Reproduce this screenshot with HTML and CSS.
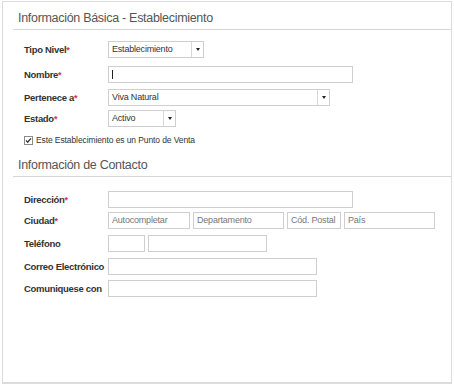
FILE: index.html
```html
<!DOCTYPE html>
<html lang="es">
<head>
<meta charset="utf-8">
<title>Establecimiento</title>
<link rel="stylesheet" href="styles.css">
</head>
<body>
<div class="panel">
  <h2 class="section-title">Información Básica - Establecimiento</h2>
  <div class="form">
    <div class="row row-tipo">
      <label class="lbl">Tipo Nivel<span class="req">*</span></label>
      <div class="select w-tipo"><span class="select-text">Establecimiento</span><span class="select-btn"><span class="tri"></span></span></div>
    </div>
    <div class="row row-nombre">
      <label class="lbl">Nombre<span class="req">*</span></label>
      <div class="input w-long"><span class="caret"></span></div>
    </div>
    <div class="row row-pert">
      <label class="lbl">Pertenece a<span class="req">*</span></label>
      <div class="select w-pert"><span class="select-text">Viva Natural</span><span class="select-btn"><span class="tri"></span></span></div>
    </div>
    <div class="row row-estado">
      <label class="lbl">Estado<span class="req">*</span></label>
      <div class="select w-estado"><span class="select-text">Activo</span><span class="select-btn"><span class="tri"></span></span></div>
    </div>
    <div class="check-row">
      <svg class="chk" width="9" height="9" viewBox="0 0 9 9"><rect x="0.5" y="0.5" width="8" height="8" fill="#fff" stroke="#8a8a8a"/><path d="M2 4.4 L3.7 6.2 L7 2.4" fill="none" stroke="#333" stroke-width="1.3"/></svg>
      <span class="check-text">Este Establecimiento es un Punto de Venta</span>
    </div>
  </div>
  <h2 class="section-title second">Información de Contacto</h2>
  <div class="form form-contact">
    <div class="row row-dir">
      <label class="lbl">Dirección<span class="req">*</span></label>
      <div class="input w-long"></div>
    </div>
    <div class="row row-ciudad">
      <label class="lbl">Ciudad<span class="req">*</span></label>
      <div class="group">
        <div class="input w-auto ph">Autocompletar</div>
        <div class="input w-depto ph">Departamento</div>
        <div class="input w-cp ph">Cód. Postal</div>
        <div class="input w-pais ph">País</div>
      </div>
    </div>
    <div class="row row-tel">
      <label class="lbl">Teléfono</label>
      <div class="group">
        <div class="input w-ind"></div>
        <div class="input w-tel"></div>
      </div>
    </div>
    <div class="row row-correo">
      <label class="lbl">Correo Electrónico</label>
      <div class="input w-mid"></div>
    </div>
    <div class="row row-com">
      <label class="lbl">Comuniquese con</label>
      <div class="input w-mid"></div>
    </div>
  </div>
</div>
</body>
</html>
```
FILE: styles.css
```css
* { box-sizing: border-box; }
html, body { margin: 0; padding: 0; background: #fff; }
body { font-family: "Liberation Sans", Arial, sans-serif; color: #333; }

.panel {
  margin: 1px 0 0 2px;
  width: 450px;
  height: 383px;
  border: 1px solid #dcdcdc;
  border-bottom-width: 2px;
  padding: 0 0 0 10px;
}

.section-title {
  margin: 0;
  padding: 8px 0 3px 5px;
  font-family: "Liberation Sans", Arial, sans-serif;
  font-weight: normal;
  font-size: 12.5px;
  letter-spacing: -0.3px;
  line-height: 16px;
  color: #555;
  border-bottom: 1px solid #d6d6d6;
}
.section-title.second { padding-top: 8px; }

.form { padding: 11px 0 0 11px; }
.form-contact { padding-top: 14px; }

.row {
  display: flex;
  align-items: center;
  height: 17px;
  margin-bottom: 6px;
}
.row-tipo { margin-bottom: 8px; }
.row-pert { margin-bottom: 4px; }
.row-estado { margin-bottom: 6px; }
.row-dir { margin-bottom: 4px; }
.row-ciudad { margin-bottom: 6px; }
.row-tel { margin-bottom: 6px; }
.row-correo { margin-bottom: 5px; }

.lbl {
  width: 84px;
  flex: none;
  white-space: nowrap;
  font-size: 9.5px;
  letter-spacing: -0.3px;
  font-weight: bold;
  color: #333;
}
.req { color: #c8336a; font-size: 9px; }

.input, .select {
  height: 17px;
  border: 1px solid #cfcfcf;
  background: #fff;
  font-size: 9px;
  letter-spacing: -0.2px;
  line-height: 15px;
  color: #333;
  flex: none;
  white-space: nowrap;
  overflow: hidden;
}
.input { padding: 0 3px; position: relative; }
.ph { color: #777; }
.caret {
  position: absolute;
  left: 3px;
  top: 3px;
  width: 1px;
  height: 9px;
  background: #222;
}

.select { display: flex; }
.select-text { flex: 1; padding: 0 3px; }
.select-btn {
  width: 12px;
  border-left: 1px solid #d8d8d8;
  display: flex;
  align-items: center;
  justify-content: center;
}
.tri {
  width: 0; height: 0;
  border-left: 2.5px solid transparent;
  border-right: 2.5px solid transparent;
  border-top: 3px solid #222;
}

.group { display: flex; gap: 3px; }

.w-tipo { width: 96px; }
.w-long { width: 245px; }
.w-pert { width: 222px; }
.w-estado { width: 68px; }
.w-auto { width: 82px; }
.w-depto { width: 91px; }
.w-cp { width: 54px; }
.w-pais { width: 91px; }
.w-ind { width: 37px; }
.w-tel { width: 119px; }
.w-mid { width: 209px; }

.check-row {
  display: flex;
  align-items: center;
  gap: 3px;
  height: 14px;
  margin-top: 1px;
  margin-bottom: 2px;
}
.chk { flex: none; }
.check-text { font-size: 8.5px; letter-spacing: -0.1px; color: #333; }
```
